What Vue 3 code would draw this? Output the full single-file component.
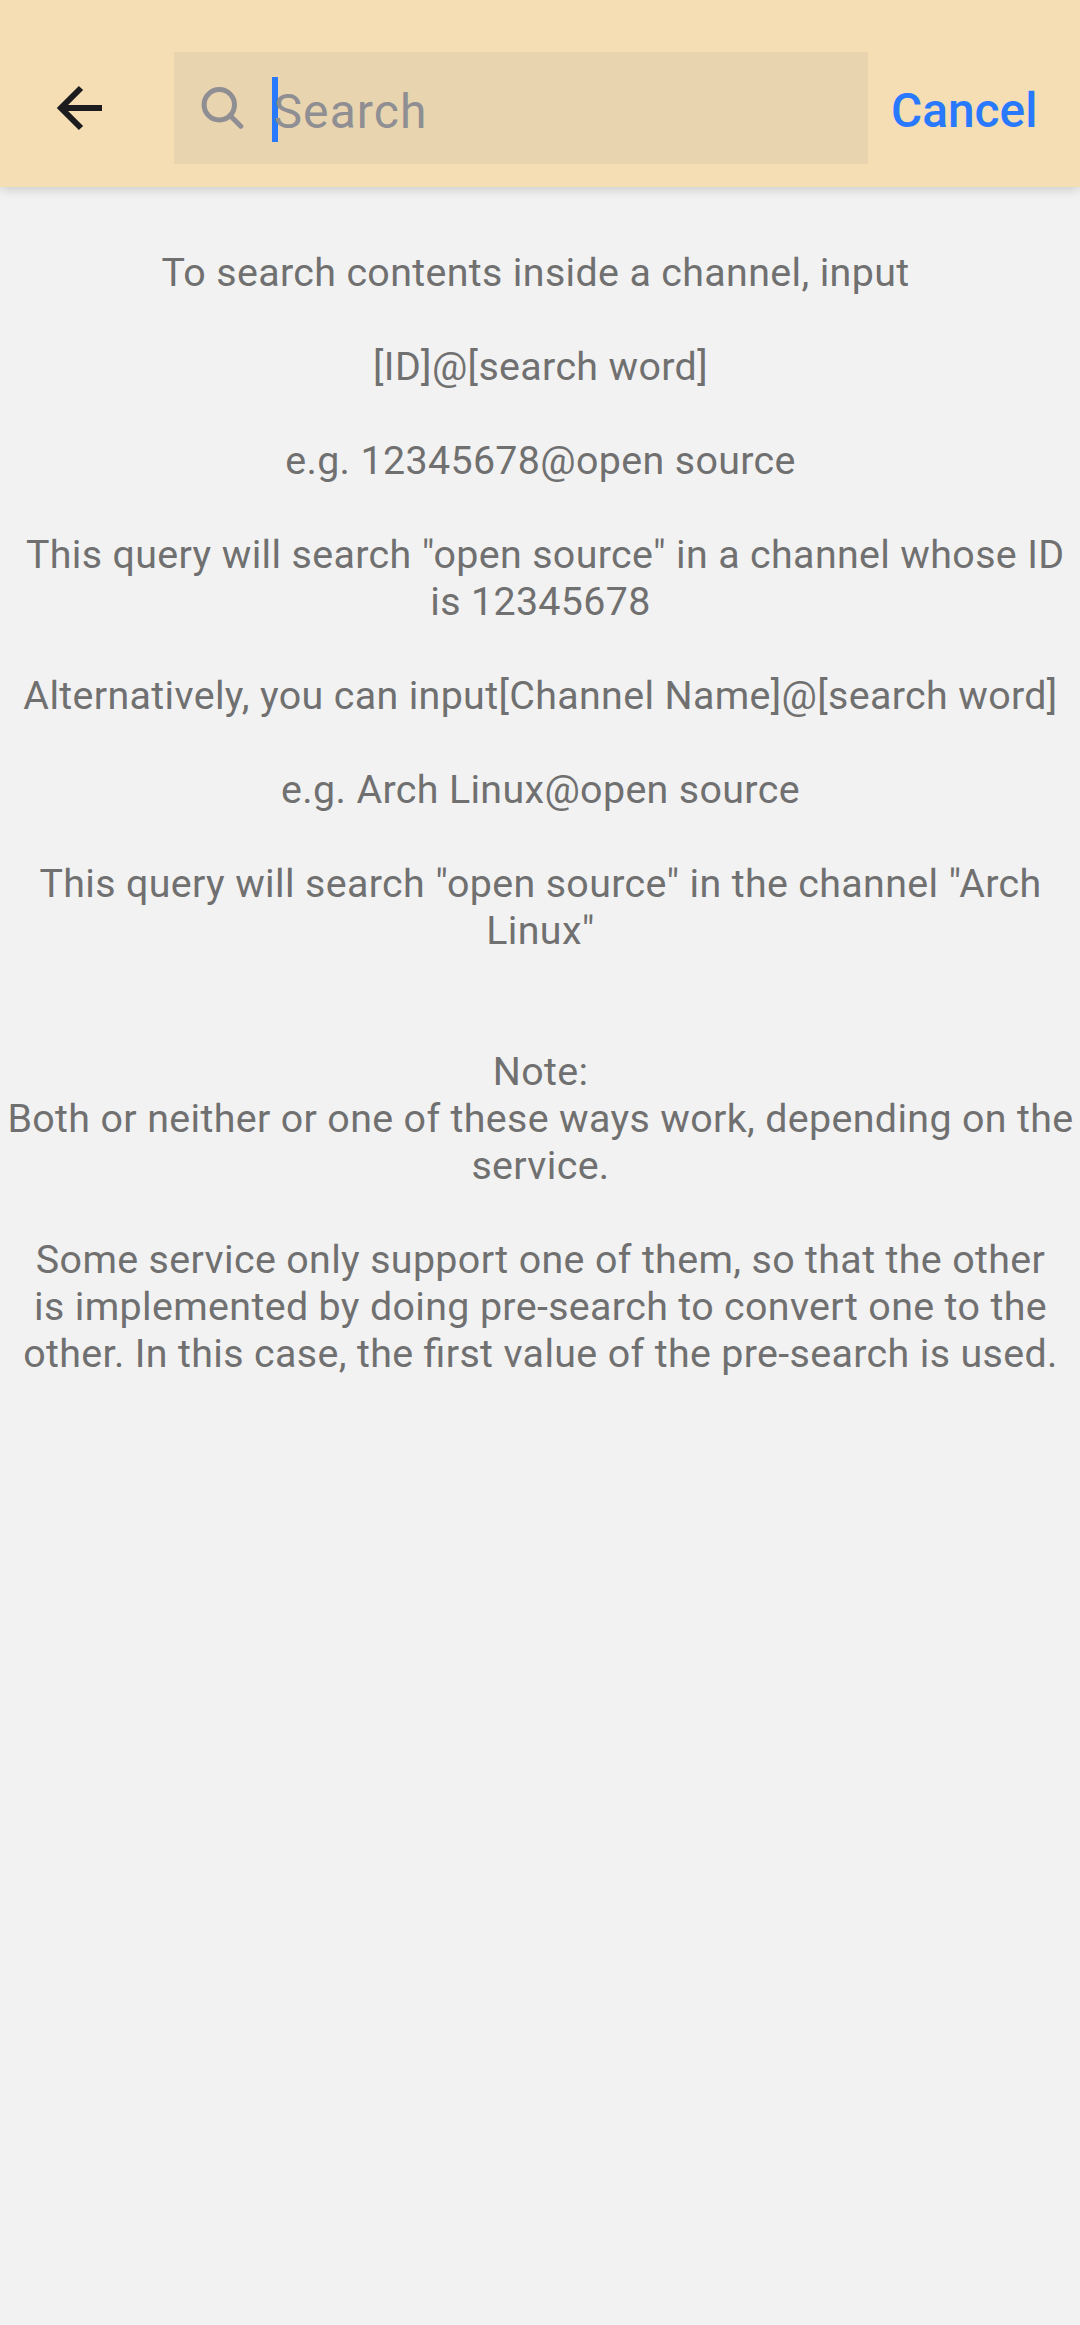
<script setup>
const helpText = [
  'To search contents inside a channel, input ',
  '',
  '[ID]@[search word]',
  '',
  'e.g. 12345678@open source',
  '',
  ' This query will search "open source" in a channel whose ID',
  'is 12345678',
  '',
  'Alternatively, you can input[Channel Name]@[search word]',
  '',
  'e.g. Arch Linux@open source',
  '',
  'This query will search "open source" in the channel "Arch',
  'Linux"',
  '',
  '',
  'Note:',
  'Both or neither or one of these ways work, depending on the',
  'service.',
  '',
  'Some service only support one of them, so that the other',
  'is implemented by doing pre-search to convert one to the',
  'other. In this case, the first value of the pre-search is used.',
].join('\n')
</script>

<template>
  <div class="page">
    <header class="bar">
      <svg class="back" width="50" height="50" viewBox="0 0 50 50">
        <path d="M29 5L9 25L29 45M9 25H50" />
      </svg>
      <div class="field">
        <svg class="glass" width="44" height="46" viewBox="0 0 44 46">
          <circle cx="19.3" cy="17.7" r="15.2" />
          <path d="M30 28.4L40.8 39.2" />
        </svg>
        <span class="input"><i class="caret"></i><span class="hint">Search</span></span>
      </div>
      <span class="cancel">Cancel</span>
    </header>
    <main class="help">{{ helpText }}</main>
  </div>
</template>

<style>
body { margin: 0; background: #f2f2f2; }
</style>
<style scoped>
.page { height: 2325px; overflow: hidden; background: #f2f2f2; font-family: Roboto, sans-serif; }
.bar {
  box-sizing: border-box;
  height: 187px;
  padding: 52px 0 0 52px;
  background: #f5deb3;
  box-shadow: 0 2px 11px rgba(0, 0, 0, .18);
  display: flex;
}
.back { margin-top: 31px; fill: none; stroke: #1c1c1e; stroke-width: 6; }
.field {
  width: 694px;
  height: 112px;
  margin-left: 72px;
  background: #e8d4af;
  display: flex;
}
.glass { margin: 35px 0 0 26px; fill: none; stroke: #8e8e93; stroke-width: 5; stroke-linecap: round; }
.input { position: relative; margin: 25px 0 0 28px; height: 65px; line-height: 65px; }
.caret { position: absolute; left: 0; top: 0; width: 6px; height: 65px; background: #2979ff; }
.hint {
  position: relative;
  top: 2px;
  padding-left: 1.5px;
  font-size: 48px;
  letter-spacing: 1.1px;
  color: #8e8e93;
}
.cancel { margin: 26px 0 0 23px; line-height: 66px; font-size: 47.8px; font-weight: 500; color: #2979ff; }
.help {
  margin-top: 62px;
  padding-left: 1px;
  font-size: 39.375px;
  letter-spacing: .36px;
  font-feature-settings: "liga" 1;
  line-height: 47px;
  text-align: center;
  white-space: pre;
  color: #707070;
}
</style>
